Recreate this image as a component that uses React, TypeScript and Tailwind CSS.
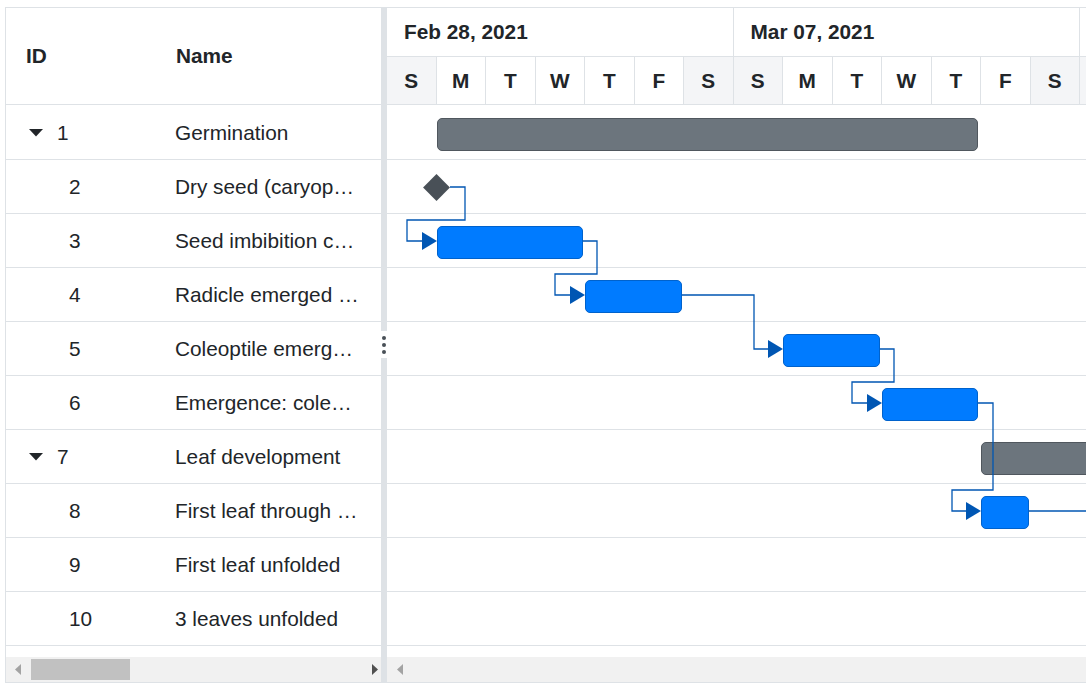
import React from "react";

const rows = [
  { id: 1, name: "Germination", parent: true },
  { id: 2, name: "Dry seed (caryopsis)" },
  { id: 3, name: "Seed imbibition complete" },
  { id: 4, name: "Radicle emerged from caryopsis" },
  { id: 5, name: "Coleoptile emerged from caryopsis" },
  { id: 6, name: "Emergence: coleoptile penetrates soil surface" },
  { id: 7, name: "Leaf development", parent: true },
  { id: 8, name: "First leaf through coleoptile" },
  { id: 9, name: "First leaf unfolded" },
  { id: 10, name: "3 leaves unfolded" },
];

const weeks = ["Feb 28, 2021", "Mar 07, 2021", "Mar 14, 2021"];
const days = ["S", "M", "T", "W", "T", "F", "S"];

// bar positions in px from the timeline start
const bars = [
  { row: 0, left: 50, width: 541, summary: true },
  { row: 2, left: 50, width: 146 },
  { row: 3, left: 198, width: 97 },
  { row: 4, left: 396, width: 97 },
  { row: 5, left: 495, width: 96 },
  { row: 6, left: 594, width: 300, summary: true },
  { row: 7, left: 594, width: 48 },
];

const links = [
  { d: "M63 81 H78 V114 H20 V135 H36", ax: 35, ay: 135 },
  { d: "M196 135 H210 V168 H168 V189 H184", ax: 183, ay: 189 },
  { d: "M295 189 H367 V243 H382", ax: 381, ay: 243 },
  { d: "M493 243 H507 V276 H465 V297 H481", ax: 480, ay: 297 },
  { d: "M591 297 H606 V384 H565 V405 H580", ax: 579, ay: 405 },
];

function Caret() {
  return (
    <svg width="14" height="8" viewBox="0 0 14 8">
      <path d="M0 0 H14 L7 7.5 Z" fill="#212529" />
    </svg>
  );
}

function Arrow({ dir, color }: { dir: "left" | "right"; color: string }) {
  return (
    <svg width="6" height="11" viewBox="0 0 6 11">
      {dir === "left" ? (
        <path d="M6 0 V11 L0 5.5 Z" fill={color} />
      ) : (
        <path d="M0 0 V11 L6 5.5 Z" fill={color} />
      )}
    </svg>
  );
}

export default function App() {
  return (
    <div className="w-[1086px] h-[689px] overflow-hidden bg-white pt-[7px] pl-[5px] font-['Liberation_Sans',Arial,sans-serif] text-[#212529]">
      <div className="flex w-[1240px] border border-[#dee2e6]">
        {/* Tree grid */}
        <div className="w-[375px] shrink-0 flex flex-col">
          <div className="h-[97px] flex items-center border-b border-[#dee2e6] font-bold text-[20.8px]">
            <div className="w-[149px] pl-[20px]">ID</div>
            <div className="pl-[21px]">Name</div>
          </div>
          <div className="pt-px">
            {rows.map((r) => (
              <div
                key={r.id}
                className="h-[54px] flex items-center border-b border-[#dee2e6] text-[20.8px]"
              >
                <div className="w-[149px] shrink-0 pl-[23px] flex items-center">
                  {r.parent ? (
                    <>
                      <Caret />
                      <span className="ml-[14px]">{r.id}</span>
                    </>
                  ) : (
                    <span className="ml-[40px]">{r.id}</span>
                  )}
                </div>
                <div className="min-w-0 flex-1 pl-[20px] pr-[20px] truncate">
                  {r.name}
                </div>
              </div>
            ))}
          </div>
          <div className="h-[11px]" />
          <div className="h-[25px] bg-[#f1f1f1] flex items-center pl-[9px] pr-[3px]">
            <Arrow dir="left" color="#a3a3a3" />
            <div className="ml-[10px] w-[99px] h-[21px] bg-[#c1c1c1]" />
            <div className="ml-auto">
              <Arrow dir="right" color="#505050" />
            </div>
          </div>
        </div>

        {/* Splitter */}
        <div className="w-[6px] shrink-0 flex flex-col">
          <div className="h-[323px] bg-[#dee2e6]" />
          <div className="h-[27px] flex flex-col items-center justify-center gap-[3px]">
            <div className="w-[4px] h-[4px] rounded-full bg-[#495057]" />
            <div className="w-[4px] h-[4px] rounded-full bg-[#495057]" />
            <div className="w-[4px] h-[4px] rounded-full bg-[#495057]" />
          </div>
          <div className="flex-1 bg-[#dee2e6]" />
        </div>

        {/* Timeline */}
        <div className="flex-1 min-w-0 flex flex-col overflow-hidden">
          <div className="h-[97px] border-b border-[#dee2e6] flex flex-col">
            <div className="h-[49px] flex border-b border-[#dee2e6]">
              {weeks.map((w) => (
                <div
                  key={w}
                  className="w-[346.5px] shrink-0 border-r border-[#dee2e6] pl-[17px] flex items-center font-bold text-[20.8px]"
                >
                  {w}
                </div>
              ))}
            </div>
            <div className="flex-1 flex">
              {weeks.map((w) =>
                days.map((d, i) => (
                  <div
                    key={w + i}
                    className={`w-[49.5px] shrink-0 border-r border-[#dee2e6] flex items-center justify-center font-bold text-[20.8px] ${
                      i === 0 || i === 6 ? "bg-[#f4f5f7]" : "bg-white"
                    }`}
                  >
                    {d}
                  </div>
                ))
              )}
            </div>
          </div>

          <div className="relative pt-px">
            {rows.map((r) => (
              <div key={r.id} className="h-[54px] border-b border-[#dee2e6]" />
            ))}

            <div className="absolute left-0 top-px w-full h-[540px]">
              {bars.map((b, i) => (
                <div
                  key={i}
                  className={`absolute h-[33px] rounded-[5px] border ${
                    b.summary
                      ? "bg-[#6c757d] border-[#50575e]"
                      : "bg-[#007bff] border-[#0062cc]"
                  }`}
                  style={{ left: b.left, width: b.width, top: b.row * 54 + 12 }}
                />
              ))}
              <div className="absolute left-[40px] top-[72px] w-[19px] h-[19px] rotate-45 bg-[#495057]" />
              <svg
                className="absolute left-0 top-0 pointer-events-none"
                width="720"
                height="540"
              >
                {links.map((l, i) => (
                  <g key={i}>
                    <path d={l.d} fill="none" stroke="#0056b3" strokeWidth="1.3" />
                    <path
                      d={`M${l.ax} ${l.ay - 9} L${l.ax + 15} ${l.ay} L${l.ax} ${l.ay + 9} Z`}
                      fill="#0056b3"
                    />
                  </g>
                ))}
                <path d="M642 405 H720" fill="none" stroke="#0056b3" strokeWidth="1.3" />
              </svg>
            </div>
          </div>

          <div className="h-[11px]" />
          <div className="h-[25px] bg-[#f1f1f1] flex items-center pl-[10px]">
            <Arrow dir="left" color="#a3a3a3" />
          </div>
        </div>
      </div>
    </div>
  );
}
